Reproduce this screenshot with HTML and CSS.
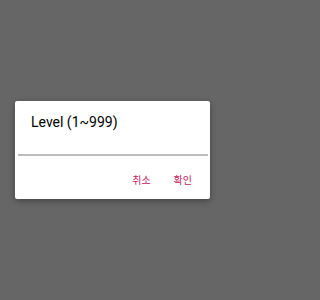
FILE: index.html
```html
<!DOCTYPE html>
<html>
<head>
<meta charset="utf-8">
<link rel="stylesheet" href="styles.css">
</head>
<body>
<div class="dialog">
  <div class="title">Level (1~999)</div>
  <div class="input-line"></div>
  <div class="actions">
    <span class="btn">취소</span>
    <span class="btn">확인</span>
  </div>
</div>
</body>
</html>
```
FILE: styles.css
```css
html, body {
  margin: 0;
  padding: 0;
  background: #666666;
  width: 226px;
  height: 300px;
  overflow: hidden;
}
.dialog {
  margin: 101px 0 0 15px;
  width: 195px;
  height: 98px;
  background: #ffffff;
  border-radius: 2px;
  box-shadow: 0 2px 6px rgba(0,0,0,0.35);
  box-sizing: border-box;
  padding-top: 13px;
}
.title {
  font-family: Roboto, "Liberation Sans", sans-serif;
  font-weight: 400;
  font-size: 14px;
  line-height: 17px;
  color: #000000;
  padding-left: 16px;
  height: 17px;
}
.input-line {
  margin: 23px 2px 0 3px;
  height: 2px;
  background: #bdbdbd;
}
.actions {
  display: flex;
  justify-content: flex-end;
  gap: 23px;
  padding-right: 18px;
  margin-top: 17px;
}
.btn {
  font-family: "Noto Sans CJK KR", sans-serif;
  font-size: 10px;
  line-height: 14px;
  color: #c2185b;
}
```
